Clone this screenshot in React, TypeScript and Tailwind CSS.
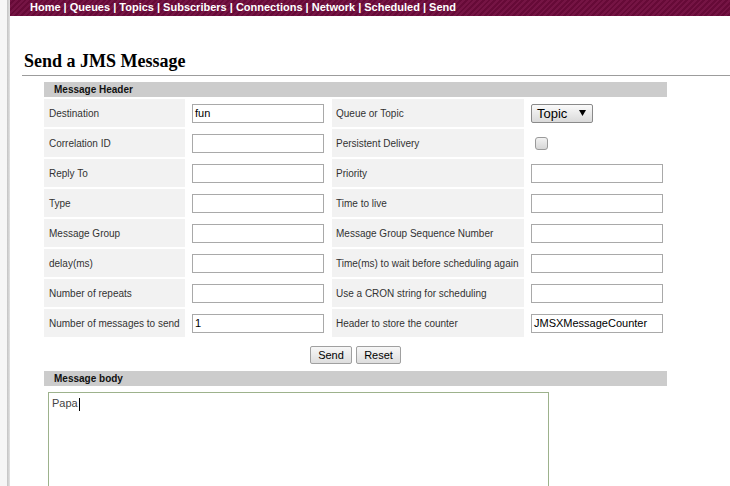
import React from "react";

type Cell = { kind: "input"; value?: string } | { kind: "select" } | { kind: "checkbox" };

const rows: [string, Cell, string, Cell][] = [
  ["Destination", { kind: "input", value: "fun" }, "Queue or Topic", { kind: "select" }],
  ["Correlation ID", { kind: "input" }, "Persistent Delivery", { kind: "checkbox" }],
  ["Reply To", { kind: "input" }, "Priority", { kind: "input" }],
  ["Type", { kind: "input" }, "Time to live", { kind: "input" }],
  ["Message Group", { kind: "input" }, "Message Group Sequence Number", { kind: "input" }],
  ["delay(ms)", { kind: "input" }, "Time(ms) to wait before scheduling again", { kind: "input" }],
  ["Number of repeats", { kind: "input" }, "Use a CRON string for scheduling", { kind: "input" }],
  ["Number of messages to send", { kind: "input", value: "1" }, "Header to store the counter", { kind: "input", value: "JMSXMessageCounter" }],
];

function Value({ cell }: { cell: Cell }) {
  if (cell.kind === "select") {
    return (
      <div className="flex h-[19px] w-[62px] items-center justify-between rounded-[2px] border border-[#8a8a8a] bg-gradient-to-b from-[#fafafa] to-[#dadada] pl-[5px] pr-[6px] text-[13px] leading-none text-black">
        <span>Topic</span>
        <svg width="7" height="6" viewBox="0 0 7 6">
          <polygon points="0,0 7,0 3.5,6" fill="#000" />
        </svg>
      </div>
    );
  }
  if (cell.kind === "checkbox") {
    return (
      <div className="ml-[4px] h-[13px] w-[13px] rounded-[3px] border border-[#9a9a9a] bg-gradient-to-b from-[#f2f2f2] to-[#d6d6d6]" />
    );
  }
  return (
    <div className="flex h-[19px] w-[132px] items-center border border-[#a9a9a9] bg-white px-[2px] text-[11px] leading-none text-black">
      {cell.value ?? ""}
    </div>
  );
}

export default function App() {
  return (
    <div className="flex min-h-[486px] bg-white font-['Liberation_Sans',Arial,sans-serif]">
      <div className="w-[7px] shrink-0 bg-[#f6f6f6]" />
      <div className="w-[3px] shrink-0 bg-gradient-to-r from-[#c2c2c2] to-[#e4e4e4]" />
      <div className="min-w-0 flex-1">
        <div className="h-[16px] bg-[repeating-linear-gradient(135deg,#751444_0px,#751444_2px,#660a37_2px,#660a37_4px)] pl-[20px] text-[11px] font-bold leading-[15px] text-white">
          Home | Queues | Topics | Subscribers | Connections | Network | Scheduled | Send
        </div>
        <div className="ml-[12px] mt-[35px] border-b border-[#9c9c9c] pb-[4px] pl-[2px]">
          <h1 className="font-['Liberation_Serif','Times_New_Roman',serif] text-[18px] font-bold leading-[20px] text-black">
            Send a JMS Message
          </h1>
        </div>
        <div className="ml-[34px] mt-[6px] w-[623px]">
          <div className="flex h-[15px] items-center bg-[#cccccc] pl-[10px] text-[10px] font-bold text-[#111]">
            Message Header
          </div>
          <div className="mt-[2px] grid grid-cols-[141px_143px_192px_141px] gap-[2px]">
            {rows.map(([l1, v1, l2, v2]) => (
              <React.Fragment key={l1}>
                <div className="flex h-[28px] items-center bg-[#f2f2f2] pl-[5px] text-[10px] text-[#333]">{l1}</div>
                <div className="flex h-[28px] items-center pl-[5px]">
                  <Value cell={v1} />
                </div>
                <div className="flex h-[28px] items-center bg-[#f2f2f2] pl-[4px] text-[10px] text-[#333]">{l2}</div>
                <div className="flex h-[28px] items-center pl-[5px]">
                  <Value cell={v2} />
                </div>
              </React.Fragment>
            ))}
          </div>
          <div className="mt-[9px] flex justify-center gap-[4px]">
            <div className="flex h-[18px] w-[42px] items-center justify-center rounded-[2px] border border-[#a0a0a0] bg-gradient-to-b from-[#f7f7f7] to-[#dedede] text-[11px] text-black">
              Send
            </div>
            <div className="flex h-[18px] w-[45px] items-center justify-center rounded-[2px] border border-[#a0a0a0] bg-gradient-to-b from-[#f7f7f7] to-[#dedede] text-[11px] text-black">
              Reset
            </div>
          </div>
          <div className="mt-[7px] flex h-[15px] items-center bg-[#cccccc] pl-[10px] text-[10px] font-bold text-[#111]">
            Message body
          </div>
          <div className="ml-[4px] mt-[6px] h-[200px] w-[501px] border border-[#9db28c] bg-white px-[3px] pt-[3px] text-[11px] leading-[14px] text-[#444]">
            <span>Papa</span>
            <span className="ml-[1px] inline-block h-[13px] w-[1px] bg-black align-middle" />
          </div>
        </div>
      </div>
    </div>
  );
}
